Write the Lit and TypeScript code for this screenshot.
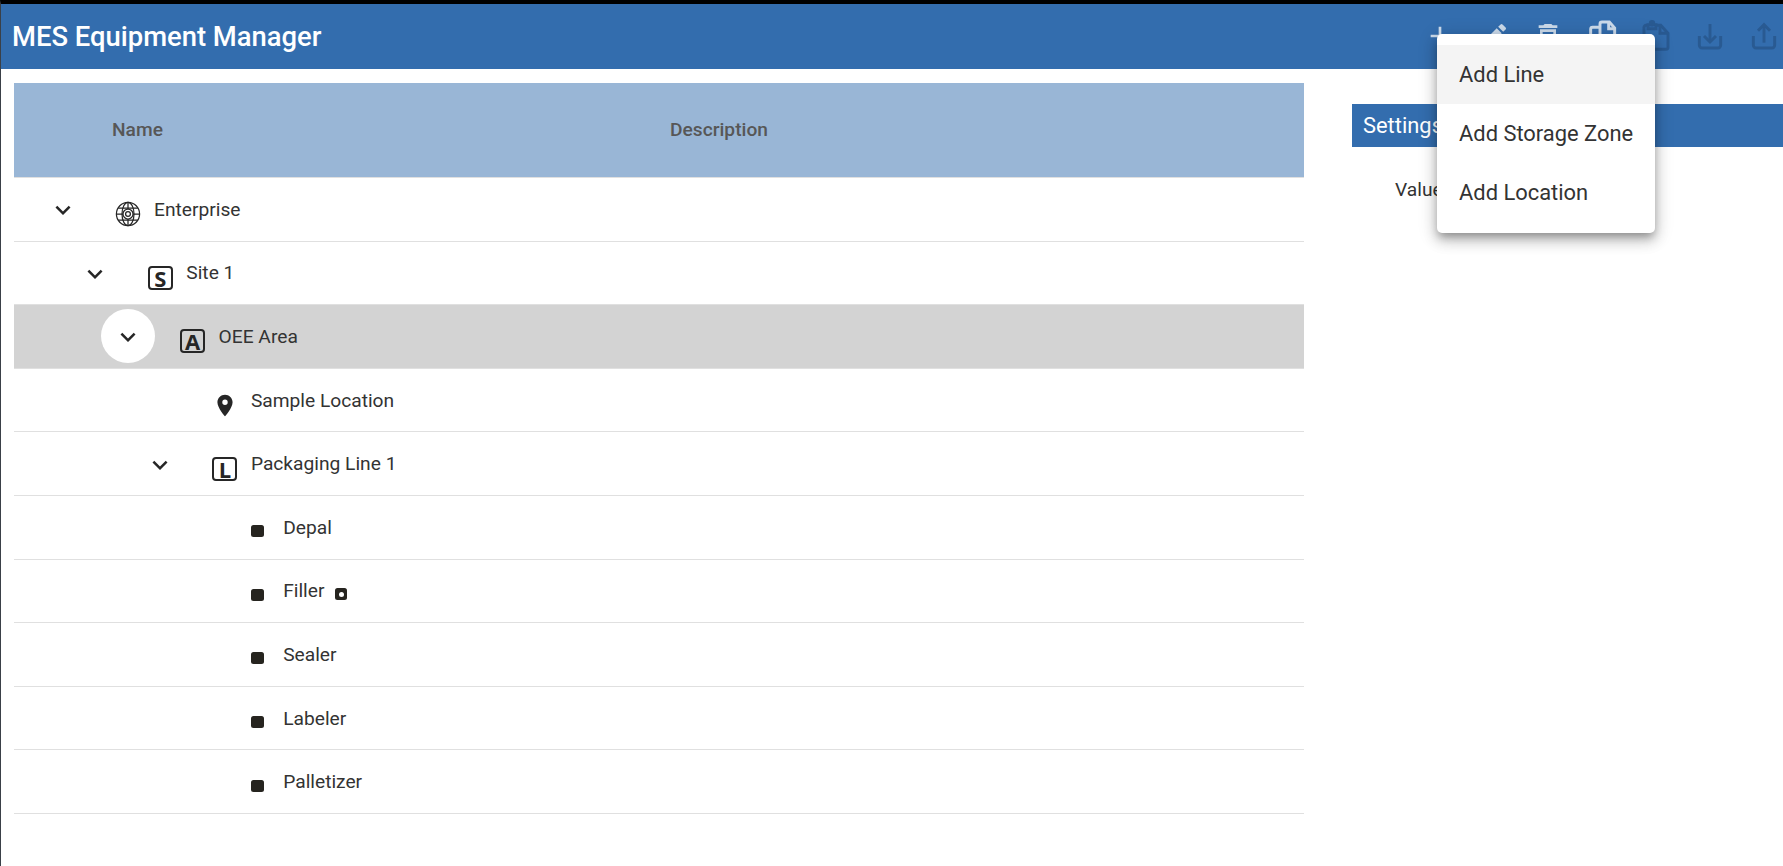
import { LitElement, html, css, svg } from "lit";
import { customElement } from "lit/decorators.js";

const FILLED: Record<string, any> = {
  add: svg`<path d="M19 13h-6v6h-2v-6H5v-2h6V5h2v6h6v2z"/>`,
  edit: svg`<path d="M3 17.25V21h3.75L17.81 9.94l-3.75-3.75L3 17.25zM20.71 7.04a1 1 0 0 0 0-1.41l-2.34-2.34a1 1 0 0 0-1.41 0l-1.83 1.83 3.75 3.75 1.83-1.83z"/>`,
  del: svg`<path d="M6 19c0 1.1.9 2 2 2h8c1.1 0 2-.9 2-2V7H6v12zM8 9h8v10H8V9zm7.5-5-1-1h-5l-1 1H5v2h14V4h-3.5z"/>`,
  chevron: svg`<path d="M16.59 8.59 12 13.17 7.41 8.59 6 10l6 6 6-6z"/>`,
  pin: svg`<path d="M12 2C8.13 2 5 5.13 5 9c0 5.25 7 13 7 13s7-7.75 7-13c0-3.87-3.13-7-7-7zm0 9.5a2.5 2.5 0 0 1 0-5 2.5 2.5 0 0 1 0 5z"/>`,
};

const STROKED: Record<string, any> = {
  copy: svg`<path d="M10.5 18V3a1.5 1.5 0 0 1 1.5-1.5h5.5l4 4.5v10.5a1.500 1.500 0 0 1-1.5 1.5z"/><path d="M17 2v4.5h4.5"/><path d="M10 5.5H5A1.5 1.5 0 0 0 3.500 7v14A1.5 1.5 0 0 0 5 22.500h9a1.5 1.5 0 0 0 1.5-1.5v-3"/>`,
  paste: svg`<path d="M5.5 4H4.5A1.5 1.5 0 0 0 3 5.5v15A1.5 1.5 0 0 0 4.5 22h15a1.5 1.5 0 0 0 1.5-1.5V10l-5.5-6H12.5"/><path d="M6 3.5h6v3H6z"/><circle cx="9" cy="2.4" r="1.3"/><path d="M15 4.500V10h6"/>`,
  download: svg`<path d="M4 12v7a2 2 0 0 0 2 2h12a2 2 0 0 0 2-2v-7"/><path d="M12 3v13"/><path d="M7.5 12l4.5 4.5 4.5-4.5"/>`,
  upload: svg`<path d="M4 12v7a2 2 0 0 0 2 2h12a2 2 0 0 0 2-2v-7"/><path d="M12 17V4"/><path d="M7.5 8L12 3.5 16.500 8"/>`,
};

const icon = (name: string, cls = "") =>
  STROKED[name]
    ? html`<svg class=${cls} viewBox="0 0 24 24" fill="none" stroke="currentColor" stroke-width="2.2">${STROKED[name]}</svg>`
    : html`<svg class=${cls} viewBox="0 0 24 24" fill="currentColor">${FILLED[name]}</svg>`;

const globe = html`<svg class="node-ic" viewBox="0 0 26 26" fill="none" stroke="currentColor" stroke-width="1.25">
  <circle cx="13" cy="13" r="11.6" />
  <ellipse cx="13" cy="13" rx="6" ry="11.6" />
  <path d="M3.2 7h19.6M3.2 19h19.6M1.4 13h6.600M18 13h6.600M13 1.400V8M13 18v6.600" />
  <circle cx="13" cy="13" r="5" />
  <circle cx="13" cy="13" r="2.4" />
</svg>`;

const letter = (l: string) => html`<span class="letter">${l}</span>`;
const square = html`<span class="square"></span>`;

interface Row {
  name: string;
  depth: number;
  chevron?: boolean;
  icon: any;
  selected?: boolean;
  extra?: boolean;
}

const ROWS: Row[] = [
  { name: "Enterprise", depth: 0, chevron: true, icon: globe },
  { name: "Site 1", depth: 1, chevron: true, icon: letter("S") },
  { name: "OEE Area", depth: 2, chevron: true, icon: letter("A"), selected: true },
  { name: "Sample Location", depth: 3, icon: icon("pin", "pin") },
  { name: "Packaging Line 1", depth: 3, chevron: true, icon: letter("L") },
  { name: "Depal", depth: 4, icon: square },
  { name: "Filler", depth: 4, icon: square, extra: true },
  { name: "Sealer", depth: 4, icon: square },
  { name: "Labeler", depth: 4, icon: square },
  { name: "Palletizer", depth: 4, icon: square },
];

@customElement("app-root")
export class AppRoot extends LitElement {
  static styles = css`
    :host {
      display: block;
      height: 866px;
      overflow: hidden;
      background: #fff;
      font-family: Roboto, "Liberation Sans", sans-serif;
      color: #333;
      border-top: 4px solid #000;
      border-left: 1px solid #3a4048;
      box-sizing: border-box;
    }
    .topbar {
      height: 65px;
      background: #336dae;
      display: flex;
      align-items: center;
      padding: 0 3px 0 11px;
    }
    .title {
      flex: 1;
      color: #fff;
      font-size: 27.4px;
      font-weight: 500;
      margin-top: 1px;
    }
    .tools {
      display: flex;
      gap: 22px;
      margin-top: -1px;
    }
    .tools svg {
      width: 32px;
      height: 32px;
      display: block;
    }
    .on {
      color: #ccdbeb;
    }
    .off {
      color: #295a92;
    }
    .body {
      display: flex;
      padding: 14px 0 0 13px;
    }
    .tree {
      width: 1290px;
      flex: none;
    }
    .head {
      height: 95px;
      padding-bottom: 2px;
      box-sizing: border-box;
      background: #99b6d6;
      border-bottom: 1px solid #e0e0e0;
      display: flex;
      align-items: center;
      font-size: 19.2px;
      font-weight: 500;
      color: #575757;
    }
    .head .name {
      width: 656px;
      padding-left: 98px;
      box-sizing: border-box;
    }
    .row {
      height: 63.6px;
      box-sizing: border-box;
      border-bottom: 1.5px solid #e0e0e0;
      display: flex;
      align-items: center;
      font-size: 19.2px;
    }
    .row.selected {
      background: #d3d3d3;
    }
    .cell {
      display: flex;
      align-items: center;
    }
    .toggle {
      width: 54px;
      height: 54px;
      border-radius: 50%;
      flex: none;
      display: flex;
      align-items: center;
      justify-content: center;
      margin-right: 25px;
      color: #262626;
    }
    .selected .toggle {
      background: #fff;
    }
    .toggle svg {
      width: 30px;
      height: 30px;
      display: block;
      margin-top: 2px;
    }
    .ic {
      width: 26px;
      height: 26px;
      flex: none;
      margin: 10px 13px 0 0;
      display: flex;
      align-items: center;
      justify-content: center;
      color: #262626;
    }
    .node-ic {
      width: 26px;
      height: 26px;
      display: block;
    }
    .pin {
      width: 27px;
      height: 27px;
      display: block;
    }
    .letter {
      width: 25px;
      height: 24px;
      box-sizing: border-box;
      flex: none;
      border: 2px solid #262626;
      border-radius: 4px;
      display: flex;
      align-items: center;
      justify-content: center;
      font-family: "Open Sans", sans-serif;
      font-size: 22px;
      font-weight: 700;
      line-height: 1;
      color: #262626;
    }
    .square {
      width: 13px;
      height: 12px;
      margin-top: -2px;
      background: #26241f;
      border-radius: 2.5px;
      display: block;
    }
    .label {
      margin-top: 0;
    }
    .marker {
      width: 12px;
      height: 12px;
      background: #26241f;
      border-radius: 2.5px;
      margin: 7px 0 0 11px;
      display: flex;
      align-items: center;
      justify-content: center;
    }
    .marker::after {
      content: "";
      width: 5px;
      height: 5px;
      border-radius: 50%;
      background: #fff;
    }
    .side {
      flex: 1;
      padding: 21px 0 0 48px;
    }
    .side-head {
      height: 43px;
      background: #336dae;
      color: #fff;
      font-size: 21.9px;
      display: flex;
      align-items: center;
      padding-left: 11px;
    }
    .value {
      font-size: 19.2px;
      padding: 31px 0 0 43px;
      color: #333;
    }
    .menu {
      position: absolute;
      left: 1437px;
      top: 34px;
      width: 218px;
      box-sizing: border-box;
      background: #fff;
      border-radius: 5px;
      padding: 11px 0;
      box-shadow: 0 5px 8px -2px rgba(0, 0, 0, 0.3), 0 8px 14px 1px rgba(0, 0, 0, 0.14), 0 3px 18px 3px rgba(0, 0, 0, 0.12);
    }
    .item {
      height: 59px;
      display: flex;
      align-items: center;
      padding-left: 22px;
      font-size: 21.9px;
      color: #333;
    }
    .item.hover {
      background: #f4f4f4;
    }
  `;

  private renderRow(r: Row) {
    return html`<div class="row ${r.selected ? "selected" : ""}">
      <div class="cell" style="padding-left:${22 + r.depth * 32.3}px">
        <span class="toggle">${r.chevron ? icon("chevron") : ""}</span>
        <span class="ic">${r.icon}</span>
        <span class="label">${r.name}</span>
        ${r.extra ? html`<span class="marker"></span>` : ""}
      </div>
    </div>`;
  }

  render() {
    return html`
      <header class="topbar">
        <div class="title">MES Equipment Manager</div>
        <div class="tools">
          <span class="on">${icon("add")}</span>
          <span class="on">${icon("edit")}</span>
          <span class="on">${icon("del")}</span>
          <span class="on">${icon("copy")}</span>
          <span class="off">${icon("paste")}</span>
          <span class="off">${icon("download")}</span>
          <span class="off">${icon("upload")}</span>
        </div>
      </header>
      <main class="body">
        <section class="tree">
          <div class="head">
            <div class="name">Name</div>
            <div>Description</div>
          </div>
          ${ROWS.map((r) => this.renderRow(r))}
        </section>
        <aside class="side">
          <div class="side-head">Settings</div>
          <div class="value">Value</div>
        </aside>
      </main>
      <div class="menu">
        <div class="item hover">Add Line</div>
        <div class="item">Add Storage Zone</div>
        <div class="item">Add Location</div>
      </div>
    `;
  }
}
